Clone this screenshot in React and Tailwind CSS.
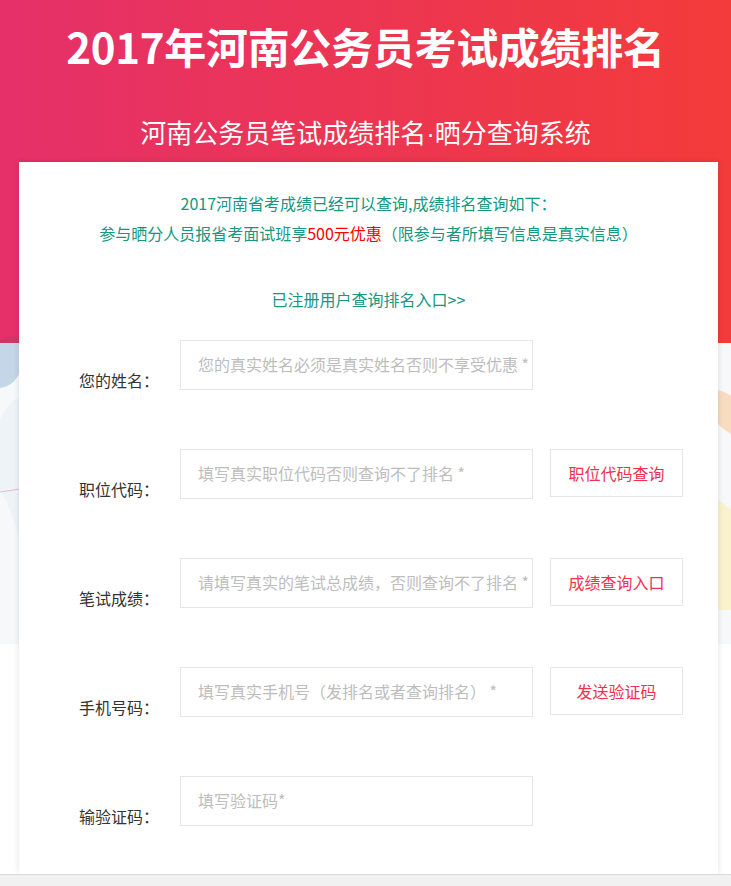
import React from "react";

const rows = [
  { label: "您的姓名：", placeholder: "您的真实姓名必须是真实姓名否则不享受优惠 *" },
  { label: "职位代码：", placeholder: "填写真实职位代码否则查询不了排名 *", button: "职位代码查询" },
  { label: "笔试成绩：", placeholder: "请填写真实的笔试总成绩，否则查询不了排名 *", button: "成绩查询入口" },
  { label: "手机号码：", placeholder: "填写真实手机号（发排名或者查询排名） *", button: "发送验证码" },
  { label: "输验证码：", placeholder: "填写验证码*" },
];

// background shapes peeking out beside the card
const Decor = () => (
  <svg className="absolute left-0 top-0 w-full h-[886px]" viewBox="0 0 731 886" preserveAspectRatio="none">
    <defs>
      <linearGradient id="hd" x1="0" y1="0" x2="1" y2="0">
        <stop offset="0" stopColor="#e5306a" />
        <stop offset="1" stopColor="#f33b3a" />
      </linearGradient>
    </defs>
    <rect x="0" y="342" width="731" height="302" fill="#f6f8fa" />
    <rect x="0" y="0" width="731" height="343" fill="url(#hd)" />
    <circle cx="562" cy="185" r="24" fill="#e12f4e" opacity="0.6" />
    <path d="M0 343 L20 343 L20 372 Q14 386 0 388 Z" fill="#c5d6e8" />
    <path d="M0 343 L20 343 L20 338 Q10 334 0 340 Z" fill="#b8405f" opacity="0.6" />
    <path d="M0 420 Q10 400 20 398 L20 540 Q8 500 0 490 Z" fill="#eef3f7" />
    <path d="M0 492 L20 489" stroke="#f0b9c6" strokeWidth="1.2" />
    <path d="M718 390 Q726 392 731 396 L731 434 Q724 430 718 424 Z" fill="#f7dcc0" />
    <path d="M718 500 Q726 505 731 510 L731 610 L718 610 Z" fill="#faf2cc" />
  </svg>
);

export default function App() {
  return (
    <div
      className="relative w-full min-h-[886px] bg-white overflow-hidden"
      style={{ fontFamily: '"Noto Sans CJK SC", "Noto Sans", sans-serif' }}
    >
      <Decor />

      <div className="relative flex flex-col">
        <h1 className="pt-[16px] text-center text-[42px] leading-[60px] font-bold text-white tracking-[-0.3px]">
          2017年河南公务员考试成绩排名
        </h1>
        <h2 className="mt-[38px] text-center text-[26px] leading-[36px] text-white">
          河南公务员笔试成绩排名<span style={{ fontFamily: '"Liberation Sans", sans-serif' }}>·</span>晒分查询系统
        </h2>

        <div className="mt-[10px] ml-[19px] w-[699px] bg-white shadow-[0_0_6px_rgba(0,0,0,0.12)] pt-[26px] pb-[48px]">
          <div className="text-center text-[16px] leading-[30px] text-[#16977f]">
            <p>2017河南省考成绩已经可以查询,成绩排名查询如下：</p>
            <p>
              参与晒分人员报省考面试班享<span className="text-[#ff0000]">500元优惠</span>（限参与者所填写信息是真实信息）
            </p>
            <p className="mt-[36px]">已注册用户查询排名入口&gt;&gt;</p>
          </div>

          <div className="mt-[26px] flex flex-col gap-[59px] pl-[60px]">
            {rows.map((r) => (
              <div key={r.label} className="flex items-end">
                <span className="w-[101px] text-[16px] leading-[20px] text-[#333]">{r.label}</span>
                <div className="w-[353px] h-[50px] border border-[#e6e6e6] flex items-center pl-[17px] pb-[2px] text-[16px] text-[#bdbdbd] whitespace-nowrap overflow-hidden">
                  {r.placeholder}
                </div>
                {r.button && (
                  <div className="ml-[17px] self-start w-[133px] h-[48px] border border-[#e6e6e6] flex items-center justify-center text-[16px] text-[#f2304d]">
                    {r.button}
                  </div>
                )}
              </div>
            ))}
          </div>
        </div>

        <div className="h-[14px] bg-[#f1f1f1] border-t border-[#dadada]" />
      </div>
    </div>
  );
}
